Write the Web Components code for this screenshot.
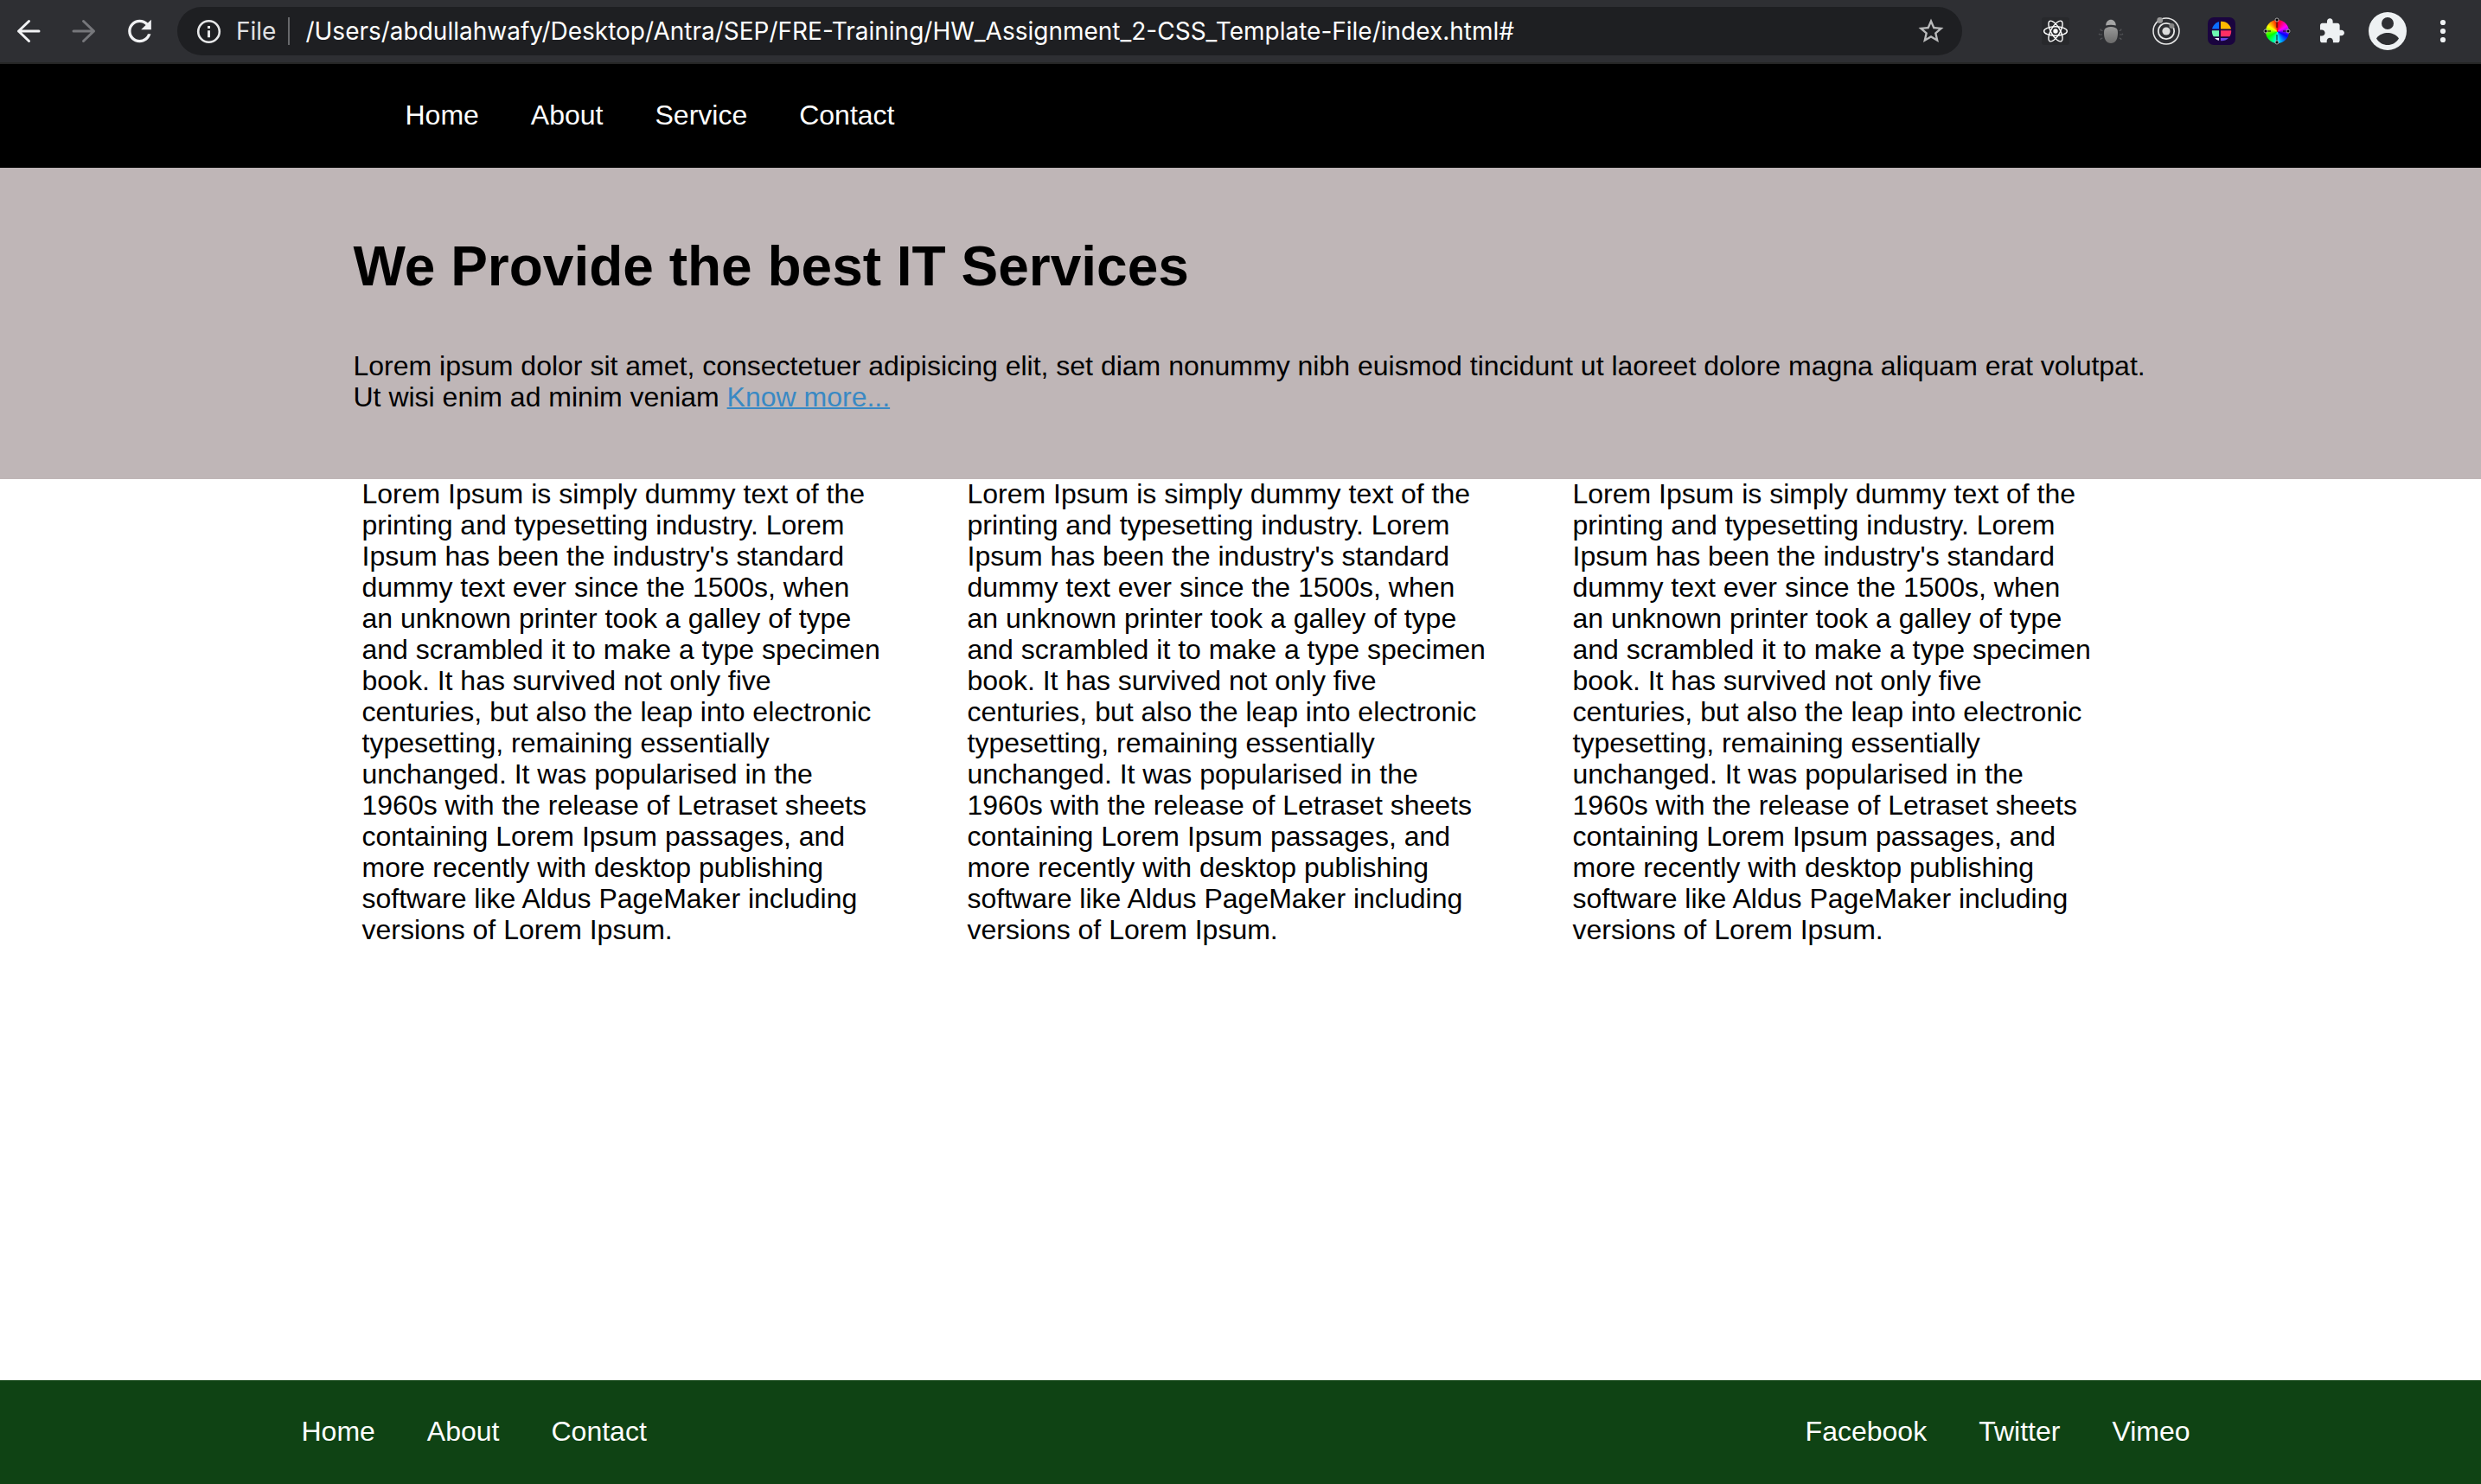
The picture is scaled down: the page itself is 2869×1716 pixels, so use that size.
<!DOCTYPE html>
<html lang="en">
<head>
<meta charset="utf-8">
<meta name="viewport" content="width=device-width, initial-scale=1">
<title>IT Services</title>
<style>
  body { margin: 0; background: #fff; color: #000; font: 32px/36px "Liberation Sans", Arial, sans-serif; }
</style>
</head>
<body>
<app-page>
  <browser-bar slot="chrome" scheme="File" url="/Users/abdullahwafy/Desktop/Antra/SEP/FRE-Training/HW_Assignment_2-CSS_Template-File/index.html#"></browser-bar>
  <site-nav slot="nav">
    <nav-link>Home</nav-link><nav-link>About</nav-link><nav-link>Service</nav-link><nav-link>Contact</nav-link>
  </site-nav>
  <hero-banner heading="We Provide the best IT Services" more="Know more..."><span>Lorem ipsum dolor sit amet, consectetuer adipisicing elit, set diam nonummy nibh euismod tincidunt ut laoreet dolore magna aliquam erat volutpat.</span> <span>Ut wisi enim ad minim veniam</span></hero-banner>
  <text-columns>
    <text-column></text-column><text-column></text-column><text-column></text-column>
  </text-columns>
  <site-footer slot="footer">
    <nav-link slot="start">Home</nav-link><nav-link slot="start">About</nav-link><nav-link slot="start">Contact</nav-link>
    <nav-link slot="end">Facebook</nav-link><nav-link slot="end">Twitter</nav-link><nav-link slot="end">Vimeo</nav-link>
  </site-footer>
</app-page>

<script>
const define = (name, render) => customElements.define(name, class extends HTMLElement {
  constructor() { super(); this.attachShadow({ mode: 'open' }); }
  connectedCallback() { this.shadowRoot.innerHTML = render(this); }
});

define('app-page', () => `
  <style>
    :host { display: flex; flex-direction: column; min-height: 100vh; }
    main { flex: 1; }
  </style>
  <slot name="chrome"></slot><slot name="nav"></slot><main><slot></slot></main><slot name="footer"></slot>`);

define('nav-link', () => `
  <style>
    :host { display: block; }
    a { color: #fff; text-decoration: none; }
  </style>
  <a href="#"><slot></slot></a>`);

define('site-nav', () => `
  <style>
    :host { display: block; background: #000; padding: 41px 0 43px; }
    nav { display: flex; gap: 60px; max-width: 2100px; margin: 0 auto; padding-left: 84px; box-sizing: border-box; }
  </style>
  <nav><slot></slot></nav>`);

define('hero-banner', el => `
  <style>
    :host { display: block; background: #bfb6b7; padding: 78px 0 77px; }
    section { max-width: 2100px; margin: 0 auto; padding-left: 24px; box-sizing: border-box; }
    h1 { margin: 0 0 61px; font-size: 64px; line-height: 72px; }
    p { margin: 0; }
    a { color: #3989c4; text-decoration-thickness: 2px; }
  </style>
  <section><h1>${el.getAttribute('heading')}</h1>
  <p><slot></slot> <a href="#">${el.getAttribute('more')}</a></p></section>`);

define('text-columns', () => `
  <style>
    :host { display: grid; grid-template-columns: repeat(3, 1fr); gap: 96px; max-width: 2100px; margin: -1px auto 0; padding: 0 62px 0 34px; box-sizing: border-box; }
  </style>
  <slot></slot>`);

define('text-column', () => `
  <style>:host { display: block; } p { margin: 0; }</style>
  <p>Lorem Ipsum is simply dummy text of the printing and typesetting industry. Lorem Ipsum has been the industry's standard dummy text ever since the 1500s, when an unknown printer took a galley of type and scrambled it to make a type specimen book. It has survived not only five centuries, but also the leap into electronic typesetting, remaining essentially unchanged. It was popularised in the 1960s with the release of Letraset sheets containing Lorem Ipsum passages, and more recently with desktop publishing software like Aldus PageMaker including versions of Lorem Ipsum.</p>`);

define('site-footer', () => `
  <style>
    :host { display: block; background: #0f4314; padding: 41px 0 43px; }
    footer { display: flex; justify-content: space-between; max-width: 2200px; margin: 0 auto; padding: 0 2px 0 14px; box-sizing: border-box; }
    nav { display: flex; gap: 60px; }
  </style>
  <footer><nav><slot name="start"></slot></nav><nav><slot name="end"></slot></nav></footer>`);

const icons = {
  back: '<path d="M36 24H12.500M24.500 12.500 12.500 24l12 11.500" fill="none" stroke="#f1f2f4" stroke-width="3" stroke-linecap="round" stroke-linejoin="round"/>',
  forward: '<path d="M12 24h23.500M23.500 12.500l12 11.500-12 11.500" fill="none" stroke="#76777b" stroke-width="3" stroke-linecap="round" stroke-linejoin="round"/>',
  reload: '<path transform="translate(4.500 4) scale(1.667)" fill="#f1f2f4" d="M17.65 6.35C16.2 4.9 14.21 4 12 4c-4.42 0-7.99 3.58-7.99 8s3.57 8 7.99 8c3.73 0 6.84-2.55 7.73-6h-2.08c-.82 2.33-3.04 4-5.65 4-3.31 0-6-2.69-6-6s2.69-6 6-6c1.66 0 3.14.69 4.22 1.78L13 11h7V4z"/>',
  info: '<circle cx="24.500" cy="24.500" r="12.300" fill="none" stroke="#e6e7e8" stroke-width="2.600"/><path d="M23 18h3v3h-3zM23 23.300h3v8h-3z" fill="#e6e7e8"/>',
  star: '<path transform="translate(6.600 6.600) scale(1.45)" fill="#b9babb" d="M22 9.240l-7.190-.62L12 2 9.190 8.630 2 9.240l5.460 4.730L5.820 21 12 17.270 18.180 21l-1.630-7.030L22 9.240zM12 15.400l-3.760 2.270 1-4.280-3.320-2.880 4.380-.38L12 6.100l1.710 4.040 4.380.38-3.320 2.880 1 4.280L12 15.400z"/>',
  atom: '<rect x="8" y="8" width="32" height="32" rx="3" fill="#28292c"/><g fill="none" stroke="#fff" stroke-width="1.400"><ellipse cx="24" cy="24" rx="13.400" ry="5.200"/><ellipse cx="24" cy="24" rx="13.400" ry="5.200" transform="rotate(60 24 24)"/><ellipse cx="24" cy="24" rx="13.400" ry="5.200" transform="rotate(120 24 24)"/></g><circle cx="24" cy="24" r="2.700" fill="#fff"/>',
  bug: '<linearGradient id="b" x2="0" y2="1"><stop stop-color="#999"/><stop offset="1" stop-color="#6b6b6b"/></linearGradient><path d="M18.200 17.500c0-9 11.600-9 11.600 0-4-1-7.600-1-11.600 0z" fill="#a5a5a5"/><path d="M16 26c0-4 1-5 3-6 3-1.300 7-1.300 10 0 2 1 3 2 3 6 0 8-3 12-8 12s-8-4-8-12z" fill="url(#b)"/><path d="M14.500 23.500l-2-.5-.5-1.500M14 28h-3l-1-1M14.500 32l-2 .5-.5 1.500M33.500 23.500l2-.5.5-1.500M34 28h3l1-1M33.500 32l2 .5.5 1.500" fill="none" stroke="#55565a" stroke-width="1.200"/>',
  orbit: '<g fill="none" stroke="#e8e8e8"><circle cx="24" cy="24" r="15" stroke-width="1.500"/><circle cx="24" cy="24" r="9.200" stroke-width="1.800"/></g><circle cx="24" cy="24" r="4.600" fill="#dcdcdc"/><circle cx="16.700" cy="11.400" r="3.400" fill="#9a9a9a"/><circle cx="30.400" cy="18" r="3" fill="#858585"/>',
  mosaic: '<rect x="8" y="8" width="32" height="32" rx="7" fill="#1a043f"/><clipPath id="m"><circle cx="24" cy="24" r="11.200"/></clipPath><g clip-path="url(#m)"><path d="M12 12h9v9.600h-9z" fill="#0b6dff"/><path d="M23 12h13v9.600H23z" fill="#ffb900"/><path d="M12 23.300h9v7h-9z" fill="#6dfbb3"/><path d="M23 23.300h13v7H23z" fill="#ff2f63"/><path d="M12 32h9v4h-9z" fill="#eee8ff"/><path d="M23 32h13v4H23z" fill="#6747e8"/></g>',
  wheel: '<foreignObject x="10.500" y="10.500" width="27" height="27"><div class="wheel"></div></foreignObject><path d="M24 11v9M24 37v-9M11 24h6M37 24h-6" stroke="#111" stroke-opacity=".75" stroke-width="1.400"/><g fill="#000" stroke="#ccc" stroke-width=".8"><circle cx="24" cy="11" r="2"/><circle cx="24" cy="37" r="2"/><circle cx="11" cy="24" r="2"/><circle cx="37" cy="24" r="2"/></g>',
  puzzle: '<path transform="translate(7.300 8) scale(1.333)" fill="#eef1f3" d="M20.500 11H19V7c0-1.100-.9-2-2-2h-4V3.500C13 2.120 11.880 1 10.500 1S8 2.120 8 3.500V5H4c-1.100 0-1.990.9-1.990 2v3.800H3.500c1.490 0 2.700 1.210 2.700 2.700s-1.210 2.700-2.700 2.700H2V20c0 1.100.9 2 2 2h3.800v-1.500c0-1.490 1.210-2.700 2.700-2.700 1.490 0 2.700 1.210 2.700 2.700V22H17c1.100 0 2-.9 2-2v-4h1.500c1.380 0 2.500-1.120 2.500-2.500S21.880 11 20.500 11z"/>',
  account: '<circle cx="24" cy="24" r="22" fill="#eef1f3"/><circle cx="24" cy="15" r="7" fill="#2e2f33"/><path d="M11 32.500C14 27.500 20 26 24 26s10 1.500 13 6.500C34 37.500 29 40 24 40s-10-2.500-13-7.500z" fill="#2e2f33"/>',
  menu: '<g fill="#eef1f3"><circle cx="24" cy="14" r="3.100"/><circle cx="24" cy="24" r="3.100"/><circle cx="24" cy="34" r="3.100"/></g>'
};

define('bar-icon', el => `
  <style>
    :host { display: block; width: 48px; height: 48px; }
    svg { display: block; width: 100%; height: 100%; }
    .wheel { width: 27px; height: 27px; border-radius: 50%; background: conic-gradient(#f00, #f0f 60deg, #00f 115deg, #0ff 180deg, #0f0 240deg, #ff0 300deg, #f00); }
  </style>
  <svg viewBox="0 0 48 48" aria-hidden="true">${icons[el.getAttribute('name')]}</svg>`);

const button = (name, label) => `<button type="button" aria-label="${label}"><bar-icon name="${name}"></bar-icon></button>`;

define('browser-bar', el => `
  <style>
    :host { display: flex; align-items: center; height: 72px; padding: 0 12px 0 1px; background: #2e2f33; border-bottom: 2px solid #262626; font-family: Inter, Roboto, sans-serif; font-size: 28px; line-height: 36px; }
    button { display: flex; justify-content: center; width: 64px; padding: 0; border: 0; background: none; }
    .address { flex: 1; display: flex; align-items: center; height: 56px; margin: 0 76px 0 12px; padding: 0 4px; border-radius: 28px; background: #1e1f22; color: #fff; }
    .address button { flex: none; }
    label { color: #e0e1e3; padding-right: 14px; border-right: 2px solid #67686b; line-height: 32px; }
    input { flex: 1; min-width: 0; margin: 0; padding: 0 0 0 18px; border: 0; outline: 0; background: none; color: inherit; font: inherit; }
  </style>
  ${button('back', 'Back')}${button('forward', 'Forward')}${button('reload', 'Reload')}
  <div class="address">
    ${button('info', 'Site information')}
    <label for="url">${el.getAttribute('scheme')}</label>
    <input id="url" type="text" spellcheck="false" value="${el.getAttribute('url')}">
    ${button('star', 'Bookmark')}
  </div>
  ${button('atom', 'Component inspector')}${button('bug', 'Debugger')}${button('orbit', 'Orbit tools')}${button('mosaic', 'Mosaic')}${button('wheel', 'Color picker')}${button('puzzle', 'Extensions')}${button('account', 'Profile')}${button('menu', 'Menu')}`);
</script>
</body>
</html>
